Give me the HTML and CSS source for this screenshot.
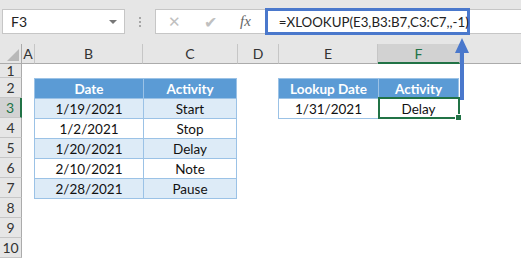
FILE: index.html
```html
<!DOCTYPE html>
<html lang="en">

<head>
    <meta charset="UTF-8">
    <title>XLOOKUP</title>
    <link rel="stylesheet" href="styles.css">
</head>

<body>
<div class="toolbar">
    <div class="namebox">
        F3
        <span class="drop"></span>
    </div>
    <div class="sep"><i></i><i></i><i></i></div>
    <div class="formula">
        <span class="icon cancel">&#x2715;</span>
        <span class="icon enter">&#x2714;</span>
        <span class="icon fx">fx</span>
        <span class="text">=XLOOKUP(E3,B3:B7,C3:C7,,-1)</span>
    </div>
</div>

<div class="sheet">
    <div class="corner"><span></span></div>
    <div class="col">A</div>
    <div class="col">B</div>
    <div class="col">C</div>
    <div class="col">D</div>
    <div class="col">E</div>
    <div class="col active">F</div>
    <div class="col last"></div>

    <div class="row">1</div>
    <div class="row">2</div>
    <div class="row active">3</div>
    <div class="row">4</div>
    <div class="row">5</div>
    <div class="row">6</div>
    <div class="row">7</div>
    <div class="row">8</div>
    <div class="row">9</div>
    <div class="row">10</div>

    <table class="data dates">
        <tr><th class="w1">Date</th><th>Activity</th></tr>
        <tr class="band"><td>1/19/2021</td><td>Start</td></tr>
        <tr><td>1/2/2021</td><td>Stop</td></tr>
        <tr class="band"><td>1/20/2021</td><td>Delay</td></tr>
        <tr><td>2/10/2021</td><td>Note</td></tr>
        <tr class="band"><td>2/28/2021</td><td>Pause</td></tr>
    </table>

    <table class="data lookup">
        <tr><th class="w2">Lookup Date</th><th>Activity</th></tr>
        <tr><td>1/31/2021</td><td class="selected">Delay</td></tr>
    </table>
</div>

<svg class="arrow" width="16" height="66" viewBox="0 0 16 66">
    <rect x="6" y="14" width="4" height="50" fill="#4a78cc"/>
    <polygon points="1,17 8,2 15,17" fill="#4a78cc"/>
</svg>
</body>

</html>
```

FILE: styles.css
```css
body {
    margin: 0;
    width: 521px;
    height: 258px;
    overflow: hidden;
    background-color: #e6e6e6;
    font-family: Lato, "Liberation Sans", sans-serif;
    position: relative;
}

.toolbar {
    height: 44px;
    display: flex;
    align-items: flex-start;
    padding: 9px 0 0 2px;
    box-sizing: border-box;
}

.namebox {
    width: 123px;
    height: 25px;
    box-sizing: border-box;
    background-color: white;
    border: 1px solid #c6c6c6;
    display: flex;
    align-items: center;
    justify-content: space-between;
    padding: 0 7px 0 8px;
    font-size: 14px;
    color: #222;
}

.drop {
    width: 0;
    height: 0;
    border-left: 4px solid transparent;
    border-right: 4px solid transparent;
    border-top: 4px solid #777;
}

.sep {
    width: 30px;
    height: 25px;
    display: flex;
    flex-direction: column;
    align-items: center;
    justify-content: center;
    gap: 2px;
}

.sep i {
    display: block;
    width: 2px;
    height: 2px;
    background-color: #a6a6a6;
}

.formula {
    flex: 1;
    height: 25px;
    box-sizing: border-box;
    background-color: white;
    border: 1px solid #c6c6c6;
    border-right: none;
    display: flex;
    align-items: center;
}

.icon {
    color: #c0c0c0;
    font-size: 15px;
}

.cancel {
    margin-left: 12px;
}

.enter {
    margin-left: 23px;
    font-size: 16px;
}

.fx {
    margin-left: 23px;
    color: #666;
    font-family: "Liberation Serif", serif;
    font-style: italic;
    font-size: 15px;
}

.formula .text {
    align-self: stretch;
    margin: -2px 0 -2px 14px;
    width: 205px;
    box-sizing: border-box;
    border: 3px solid #4a78cc;
    display: flex;
    align-items: center;
    padding-left: 11px;
    font-size: 13.3px;
    color: #222;
    white-space: nowrap;
}

.sheet {
    display: grid;
    grid-template-columns: 22px 13px 108px 95px 41px 99px 82px 1fr;
    grid-template-rows: 20px 14px repeat(9, 20px);
    background-color: white;
    font-size: 13.5px;
}

.corner {
    background-color: #e6e6e6;
    border-right: 1px solid #ababab;
    border-bottom: 1px solid #ababab;
    position: relative;
}

.corner span {
    position: absolute;
    right: 2px;
    bottom: 2px;
    width: 0;
    height: 0;
    border-left: 12px solid transparent;
    border-bottom: 12px solid #b8b8b8;
}

.col {
    background-color: #e6e6e6;
    border-right: 1px solid #c6c6c6;
    border-bottom: 1px solid #ababab;
    display: flex;
    align-items: center;
    justify-content: center;
    color: #333;
    font-size: 14px;
}

.col.last {
    border-right: none;
}

.col.active {
    background-color: #d2d2d2;
    border-bottom: 2px solid #217346;
    color: #217346;
}

.row {
    grid-column: 1;
    background-color: #e6e6e6;
    border-right: 1px solid #ababab;
    border-bottom: 1px solid #c6c6c6;
    display: flex;
    align-items: center;
    justify-content: center;
    color: #333;
    font-size: 14px;
}

.row.active {
    background-color: #d2d2d2;
    border-right: 2px solid #217346;
    color: #217346;
}

.data {
    border-collapse: collapse;
    table-layout: fixed;
    width: 100%;
    height: 100%;
    margin-left: -1px;
}

.data th,
.data td {
    border: 1px solid #9bc2e6;
    padding: 0;
    height: 19px;
    text-align: center;
    color: #111;
}

.data th {
    background-color: #5b9bd5;
    color: white;
    font-weight: bold;
}

.data .band td {
    background-color: #ddebf7;
}

.dates {
    grid-column: 3 / 5;
    grid-row: 3 / 9;
}

.lookup {
    grid-column: 6 / 8;
    grid-row: 3 / 5;
}

.w1 {
    width: 108px;
}

.w2 {
    width: 99px;
}

.selected {
    position: relative;
}

.selected:after {
    content: '';
    position: absolute;
    left: -1px;
    top: -2px;
    right: -2px;
    bottom: -1px;
    border: 2px solid #217346;
}

.selected:before {
    content: '';
    position: absolute;
    right: -4px;
    bottom: -3px;
    width: 5px;
    height: 5px;
    background-color: #217346;
    border: 1px solid white;
    z-index: 1;
}

.arrow {
    position: absolute;
    left: 454px;
    top: 36px;
}
```
